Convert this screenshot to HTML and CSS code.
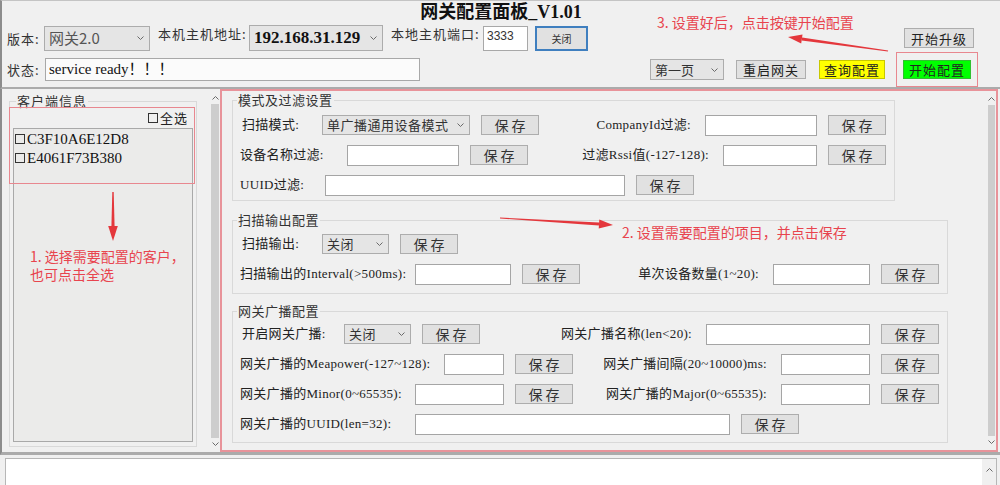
FILE: index.html
```html
<!DOCTYPE html>
<html lang="zh-CN">
<head>
    <meta charset="UTF-8">
    <title>网关配置面板_V1.01</title>
    <link rel="stylesheet" href="styles.css">
</head>
<body>
    <header class="top">
        <div class="title">网关配置面板_V1.01</div>
        <div class="hrow">
            <span class="hlbl w37">版本:</span>
            <div class="combo combo-ver"><span>网关2.0</span><svg class="chev" width="7" height="4"><polyline points="0.5,0.5 3.5,3.5 6.5,0.5"/></svg></div>
            <span class="hlbl up ml8 w91">本机主机地址:</span>
            <div class="combo combo-ip"><span>192.168.31.129</span><svg class="chev" width="7" height="4"><polyline points="0.5,0.5 3.5,3.5 6.5,0.5"/></svg></div>
            <span class="hlbl up ml8 w92">本地主机端口:</span>
            <input class="port" value="3333" readonly>
            <button class="btn-close">关闭</button>
            <button class="tbtn upgrade">开始升级</button>
        </div>
        <div class="hrow hrow2">
            <span class="hlbl w38">状态:</span>
            <div class="status">service ready！！！</div>
            <div class="combo combo-page"><span>第一页</span><svg class="chev" width="7" height="4"><polyline points="0.5,0.5 3.5,3.5 6.5,0.5"/></svg></div>
            <button class="tbtn restart">重启网关</button>
            <button class="tbtn query">查询配置</button>
            <div class="hl"><button class="tbtn start">开始配置</button></div>
        </div>
    </header>

    <main class="main">
        <aside class="clients">
            <fieldset class="group">
                <legend>客户端信息</legend>
                <div class="pick-all"><span class="box"></span>全选</div>
                <div class="list">
                    <div class="item"><span class="box"></span>C3F10A6E12D8</div>
                    <div class="item"><span class="box"></span>E4061F73B380</div>
                </div>
            </fieldset>
        </aside>
        <div class="vscroll">
            <div class="arr"><svg width="7" height="4"><polyline points="0.5,3.5 3.5,0.5 6.5,3.5"/></svg></div>
            <div class="thumb"></div>
            <div class="arr"><svg width="7" height="4"><polyline points="0.5,0.5 3.5,3.5 6.5,0.5"/></svg></div>
        </div>

        <section class="config">
            <div class="config-body">
                <!-- 模式及过滤设置 -->
                <fieldset class="group g1">
                    <legend>模式及过滤设置</legend>
                    <div class="frow">
                        <span class="lbl w82 ind">扫描模式:</span>
                        <div class="combo fcombo w148"><span>单广播通用设备模式</span><svg class="chev" width="7" height="4"><polyline points="0.5,0.5 3.5,3.5 6.5,0.5"/></svg></div>
                        <button class="save">保存</button>
                        <div class="right">
                            <span class="lbl">CompanyId过滤:</span>
                            <input class="inp w112" readonly>
                            <button class="save">保存</button>
                        </div>
                    </div>
                    <div class="frow">
                        <span class="lbl w107">设备名称过滤:</span>
                        <input class="inp w112" readonly>
                        <button class="save">保存</button>
                        <div class="right">
                            <span class="lbl">过滤Rssi值(-127-128):</span>
                            <input class="inp w94" readonly>
                            <button class="save">保存</button>
                        </div>
                    </div>
                    <div class="frow">
                        <span class="lbl w85">UUID过滤:</span>
                        <input class="inp w300" readonly>
                        <button class="save">保存</button>
                    </div>
                </fieldset>

                <!-- 扫描输出配置 -->
                <fieldset class="group g2">
                    <legend>扫描输出配置</legend>
                    <div class="frow">
                        <span class="lbl w82 ind">扫描输出:</span>
                        <div class="combo fcombo w67"><span>关闭</span><svg class="chev" width="7" height="4"><polyline points="0.5,0.5 3.5,3.5 6.5,0.5"/></svg></div>
                        <button class="save">保存</button>
                    </div>
                    <div class="frow">
                        <span class="lbl w175">扫描输出的Interval(&gt;500ms):</span>
                        <input class="inp w96" readonly>
                        <button class="save">保存</button>
                        <div class="right">
                            <span class="lbl">单次设备数量(1~20):</span>
                            <input class="inp w97" readonly>
                            <button class="save">保存</button>
                        </div>
                    </div>
                </fieldset>

                <!-- 网关广播配置 -->
                <fieldset class="group g3">
                    <legend>网关广播配置</legend>
                    <div class="frow">
                        <span class="lbl w104 ind">开启网关广播:</span>
                        <div class="combo fcombo w67"><span>关闭</span><svg class="chev" width="7" height="4"><polyline points="0.5,0.5 3.5,3.5 6.5,0.5"/></svg></div>
                        <button class="save">保存</button>
                        <div class="right">
                            <span class="lbl">网关广播名称(len&lt;20):</span>
                            <input class="inp w164" readonly>
                            <button class="save">保存</button>
                        </div>
                    </div>
                    <div class="frow">
                        <span class="lbl w204">网关广播的Meapower(-127~128):</span>
                        <input class="inp w60" readonly>
                        <button class="save">保存</button>
                        <div class="right">
                            <span class="lbl">网关广播间隔(20~10000)ms:</span>
                            <input class="inp w89" readonly>
                            <button class="save">保存</button>
                        </div>
                    </div>
                    <div class="frow">
                        <span class="lbl w175">网关广播的Minor(0~65535):</span>
                        <input class="inp w89" readonly>
                        <button class="save">保存</button>
                        <div class="right">
                            <span class="lbl">网关广播的Major(0~65535):</span>
                            <input class="inp w89" readonly>
                            <button class="save">保存</button>
                        </div>
                    </div>
                    <div class="frow">
                        <span class="lbl w175">网关广播的UUID(len=32):</span>
                        <input class="inp w315" readonly>
                        <button class="save">保存</button>
                    </div>
                </fieldset>
            </div>
            <div class="vscroll slim">
                <div class="arr"><svg width="7" height="4"><polyline points="0.5,3.5 3.5,0.5 6.5,3.5"/></svg></div>
                <div class="thumb"></div>
                <div class="arr"><svg width="7" height="4"><polyline points="0.5,0.5 3.5,3.5 6.5,0.5"/></svg></div>
            </div>
        </section>
    </main>

    <div class="log">
        <div class="log-bar"><svg width="7" height="4"><polyline points="0.5,3.5 3.5,0.5 6.5,3.5"/></svg></div>
    </div>

    <!-- 标注 -->
    <div class="mark mark-clients"></div>
    <div class="note note1">1. 选择需要配置的客户，<br>也可点击全选</div>
    <div class="note note2">2. 设置需要配置的项目，并点击保存</div>
    <div class="note note3">3. 设置好后，点击按键开始配置</div>
    <svg class="arrows" width="1000" height="485">
        <polygon points="112.3,192 113.7,192 114.6,227 111.4,227"/>
        <polygon points="108.2,226 117.8,226 113,241"/>
        <polygon points="500,217.5 500,218.5 598.9,225.6 599.1,222.6"/>
        <polygon points="599.3,219.6 598.7,228.6 613,225"/>
        <polygon points="888.1,50.5 887.9,51.5 801.6,40.4 802.1,37.5"/>
        <polygon points="802.5,34.5 801.2,43.4 788,37"/>
    </svg>
</body>
</html>
```

FILE: styles.css
```css
* {
    box-sizing: border-box;
}

body {
    margin: 0;
    width: 1000px;
    height: 485px;
    overflow: hidden;
    position: relative;
    background: #f0f0f0;
    color: #222;
    font: 13px/1.2 "Liberation Serif", "Noto Sans CJK SC", serif;
}

svg polyline {
    fill: none;
    stroke: #6a6a6a;
    stroke-width: 1;
}

/* top bar */
.top {
    height: 89px;
    border-top: 1px solid #c4c4c4;
    border-left: 2px solid #8c8c8c;
    border-bottom: 2px solid #ababab;
}

.title {
    height: 22px;
    line-height: 22px;
    text-align: center;
    font-weight: bold;
    font-size: 18px;
    color: #111;
}

.hrow {
    display: flex;
    align-items: center;
    height: 26px;
    margin-top: 2px;
    padding-left: 5px;
}

.hrow2 {
    height: 35px;
    margin-top: 1px;
}

.hlbl {
    flex: none;
    font-family: "Noto Sans CJK SC", sans-serif;
    font-size: 13px;
    line-height: 17px;
    letter-spacing: 1px;
    color: #333;
}

.up {
    align-self: flex-start;
}

.ml8 { margin-left: 8px; }
.w37 { width: 37px; }
.w38 { width: 38px; }
.w91 { width: 91px; }
.w92 { width: 92px; }

.combo {
    flex: none;
    display: flex;
    align-items: center;
    justify-content: space-between;
    background: #e5e5e5;
    border: 1px solid #acacac;
    padding: 0 5px 0 4px;
    font-family: "Noto Sans CJK SC", sans-serif;
    color: #333;
    white-space: nowrap;
}

.chev {
    flex: none;
}

.combo-ver {
    width: 106px;
    height: 25px;
    font-size: 15px;
    color: #555;
}

.combo-ip {
    width: 134px;
    height: 26px;
    font: bold 17px "Liberation Serif", serif;
    color: #111;
}

.combo-page {
    width: 74px;
    height: 21px;
    margin-left: 230px;
    font-size: 13px;
}

.port {
    flex: none;
    width: 45px;
    height: 25px;
    padding: 0 3px 4px;
    border: 1px solid #a8a8a8;
    background: #fff;
    font: 12px "Liberation Sans", sans-serif;
    color: #333;
}

.btn-close {
    flex: none;
    margin-left: 7px;
    width: 53px;
    height: 25px;
    padding: 0;
    border: 2px solid #3f7fbf;
    background: #e1e1e1;
    font: 10px "Noto Sans CJK SC", sans-serif;
    color: #333;
}

.tbtn {
    flex: none;
    height: 19px;
    padding: 0;
    border: 1px solid #adadad;
    background: #e1e1e1;
    font: 13px/17px "Noto Sans CJK SC", sans-serif;
    letter-spacing: 1px;
    color: #222;
}

.upgrade {
    margin-left: auto;
    margin-right: 26px;
    width: 70px;
    height: 20px;
}

.restart {
    margin-left: 12px;
    width: 70px;
}

.query {
    margin-left: 13px;
    width: 66px;
    background: #ffff00;
    border-color: #c8c800;
}

.hl {
    flex: none;
    margin-left: 11px;
    width: 82px;
    height: 35px;
    border: 1px solid #e8878f;
    display: flex;
    align-items: center;
    justify-content: center;
}

.start {
    width: 68px;
    background: #00ff00;
    border-color: #30c030;
}

.status {
    flex: none;
    width: 375px;
    height: 23px;
    padding-left: 3px;
    background: #fbfbfb;
    border: 1px solid #a8a8a8;
    font-size: 15px;
    line-height: 21px;
    color: #111;
}

/* main area */
.main {
    display: flex;
    height: 366px;
    border-left: 2px solid #8c8c8c;
    border-bottom: 3px solid #ababab;
}

.clients {
    flex: none;
    width: 208px;
}

.vscroll {
    flex: none;
    width: 10px;
    display: flex;
    flex-direction: column;
    padding: 3px 0 2px;
}

.vscroll .arr {
    height: 12px;
    display: flex;
    align-items: center;
    justify-content: center;
}

.vscroll .thumb {
    flex: 1;
    margin: 0 1px;
    background: #cdcdcd;
}

.vscroll.slim {
    width: 9px;
    padding-top: 2px;
}

.group {
    margin: 0;
    min-width: 0;
    border: 1px solid #d9d9d9;
    padding: 0 8px 0 7px;
}

.group legend {
    padding: 0 1px;
    margin-left: -3px;
    font: 13px/16px "Noto Sans CJK SC", sans-serif;
    letter-spacing: 0.5px;
    color: #333;
}

.clients .group {
    margin: 4px 0 0 7px;
    width: 188px;
    height: 354px;
    padding: 0 3px 4px 3px;
}

.clients .group legend {
    margin-left: 3px;
    letter-spacing: 1px;
}

.pick-all {
    display: flex;
    justify-content: flex-end;
    align-items: center;
    height: 16px;
    margin-top: 1px;
    padding-right: 5px;
    font: 13px/16px "Noto Sans CJK SC", sans-serif;
    letter-spacing: 1px;
    color: #222;
}

.box {
    flex: none;
    width: 10px;
    height: 10px;
    margin-right: 2px;
    border: 1px solid #333;
}

.list {
    margin-top: 2px;
    height: 314px;
    padding-left: 1px;
    background: #ebebea;
    border: 1px solid #a9a9a9;
}

.list .item {
    display: flex;
    align-items: center;
    height: 19px;
    font-size: 15px;
    color: #111;
}

.config {
    flex: none;
    width: 778px;
    display: flex;
    border: 2px solid #e8939a;
}

.config-body {
    flex: 1;
    padding: 1px 0 0 10px;
}

.g1 {
    width: 663px;
    padding-top: 2px;
}

.g2 {
    width: 716px;
    margin-top: 11px;
    padding-top: 1px;
    padding-bottom: 4px;
}

.g3 {
    width: 716px;
    margin-top: 9px;
    padding-bottom: 3px;
}

.frow {
    display: flex;
    align-items: center;
    height: 30px;
}

.right {
    margin-left: auto;
    display: flex;
    align-items: center;
}

.lbl {
    flex: none;
    white-space: nowrap;
    font-size: 13px;
    letter-spacing: 0.3px;
    color: #222;
}

.ind {
    padding-left: 2px;
}

.right .lbl {
    margin-right: 14px;
}

.fcombo {
    height: 20px;
    font-size: 13px;
    letter-spacing: 0.5px;
}

.inp {
    flex: none;
    height: 21px;
    padding: 0;
    border: 1px solid #a5a5a5;
    background: #fff;
}

.save {
    flex: none;
    width: 58px;
    height: 20px;
    margin-left: 11px;
    padding: 0 0 0 3px;
    border: 1px solid #adadad;
    background: #e1e1e1;
    font: 14px/18px "Noto Sans CJK SC", sans-serif;
    letter-spacing: 3px;
    color: #333;
}

.w60 { width: 60px; }
.w67 { width: 67px; }
.w82 { width: 82px; }
.w85 { width: 85px; }
.w89 { width: 89px; }
.w94 { width: 94px; }
.w96 { width: 96px; }
.w97 { width: 97px; }
.w104 { width: 104px; }
.w107 { width: 107px; }
.w112 { width: 112px; }
.w148 { width: 148px; }
.w164 { width: 164px; }
.w175 { width: 175px; }
.w204 { width: 204px; }
.w300 { width: 300px; }
.w315 { width: 315px; }

/* log box */
.log {
    display: flex;
    justify-content: flex-end;
    height: 27px;
    margin: 3px 3px 0 5px;
    background: #fff;
    border: 1px solid #b7b7b7;
    border-bottom: 0;
}

.log-bar {
    width: 14px;
    display: flex;
    justify-content: center;
    padding-top: 9px;
    background: #f0f0f0;
}

/* annotations */
.mark {
    position: absolute;
    border: 1px solid #e8878f;
}

.mark-clients {
    left: 9px;
    top: 107px;
    width: 186px;
    height: 77px;
}

.note {
    position: absolute;
    font: 14px/18px "Noto Sans CJK SC", sans-serif;
    color: #e8444e;
    white-space: nowrap;
}

.note1 { left: 30px; top: 247px; }
.note2 { left: 622px; top: 223px; }
.note3 { left: 657px; top: 13px; }

.arrows {
    position: absolute;
    left: 0;
    top: 0;
    pointer-events: none;
}

.arrows polygon {
    fill: #e4373c;
}
```
